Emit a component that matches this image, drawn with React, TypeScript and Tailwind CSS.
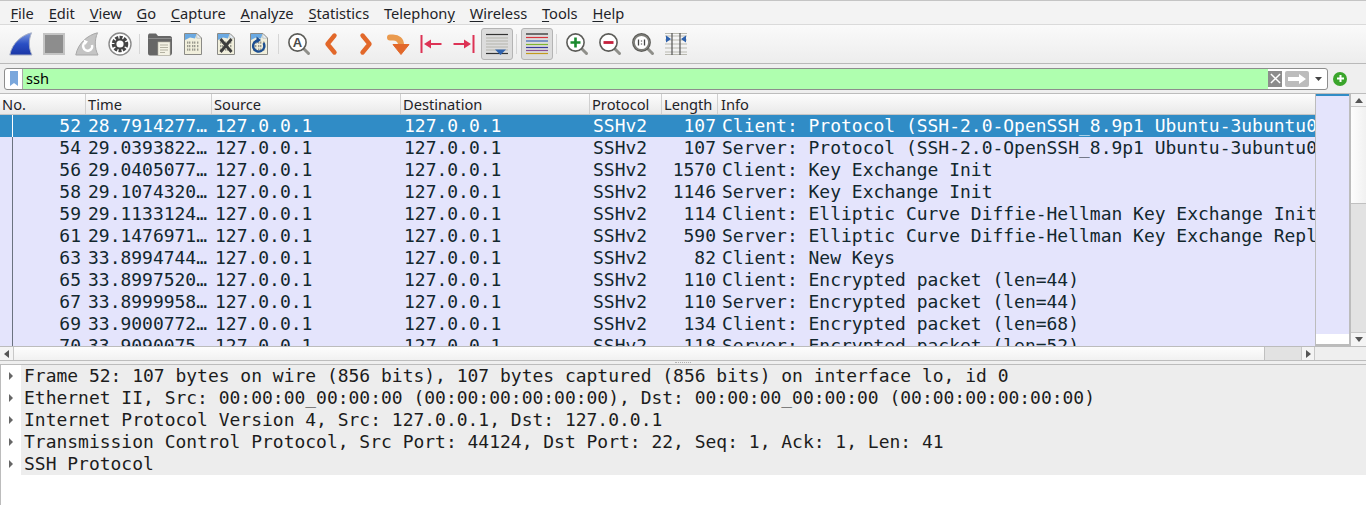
import type { ReactNode } from "react";

const menus: [string, string][] = [
  ["F", "ile"], ["E", "dit"], ["V", "iew"], ["G", "o"], ["C", "apture"], ["A", "nalyze"],
  ["S", "tatistics"], ["", "Telephony"], ["W", "ireless"], ["T", "ools"], ["H", "elp"],
];

const packets = [
  ["52", "28.7914277…", "107", "Client: Protocol (SSH-2.0-OpenSSH_8.9p1 Ubuntu-3ubuntu0.1)"],
  ["54", "29.0393822…", "107", "Server: Protocol (SSH-2.0-OpenSSH_8.9p1 Ubuntu-3ubuntu0.1)"],
  ["56", "29.0405077…", "1570", "Client: Key Exchange Init"],
  ["58", "29.1074320…", "1146", "Server: Key Exchange Init"],
  ["59", "29.1133124…", "114", "Client: Elliptic Curve Diffie-Hellman Key Exchange Init"],
  ["61", "29.1476971…", "590", "Server: Elliptic Curve Diffie-Hellman Key Exchange Reply, New Keys"],
  ["63", "33.8994744…", "82", "Client: New Keys"],
  ["65", "33.8997520…", "110", "Client: Encrypted packet (len=44)"],
  ["67", "33.8999958…", "110", "Server: Encrypted packet (len=44)"],
  ["69", "33.9000772…", "134", "Client: Encrypted packet (len=68)"],
  ["70", "33.9090075…", "118", "Server: Encrypted packet (len=52)"],
];

const details = [
  "Frame 52: 107 bytes on wire (856 bits), 107 bytes captured (856 bits) on interface lo, id 0",
  "Ethernet II, Src: 00:00:00_00:00:00 (00:00:00:00:00:00), Dst: 00:00:00_00:00:00 (00:00:00:00:00:00)",
  "Internet Protocol Version 4, Src: 127.0.0.1, Dst: 127.0.0.1",
  "Transmission Control Protocol, Src Port: 44124, Dst Port: 22, Seq: 1, Ack: 1, Len: 41",
  "SSH Protocol",
];

const columns = [
  ["No.", "w-[86px] pl-[2px]"], ["Time", "w-[126px] pl-[2px]"], ["Source", "w-[189px] pl-[2px]"], ["Destination", "w-[189px] pl-[2px]"],
  ["Protocol", "w-[72px] pl-[2px]"], ["Length", "w-[56px] pl-[2px]"], ["Info", "flex-1 pl-[3px]"],
];

function Ico({ children }: { children: ReactNode }) {
  return (
    <svg width="24" height="24" viewBox="0 0 24 24" fill="none">
      {children}
    </svg>
  );
}

function Tool({ children, checked }: { children: ReactNode; checked?: boolean }) {
  return (
    <div className="w-[33px] h-[32px] flex items-center justify-center">
      {checked ? (
        <div className="w-[32px] h-[32px] flex items-center justify-center rounded-[3px] border border-[#b4b4b4] bg-[#dcdcdc]">
          {children}
        </div>
      ) : (
        children
      )}
    </div>
  );
}

const Sep = () => <div className="w-[7px] flex justify-center"><div className="w-px h-[20px] bg-[#d6d6d6]" /></div>;

function Doc({ children }: { children?: ReactNode }) {
  return (
    <>
      <path d="M3.5 1.5H16L20.5 6V22.5H3.5Z" fill="#f1efdc" stroke="#8a8a86" />
      <path d="M4 2H15.5L14 6.5L9 5.5L4 8Z" fill="#6aa9e2" />
      <path d="M15.8 1.8V6.2H20.2Z" fill="#e8f1fa" stroke="#a0a0a0" strokeWidth=".5" />
      <g fill="#9a9a8e">
        {[9.5, 13, 16.5].map((y) =>
          [6, 8, 11, 13, 16].map((x) => <rect key={`${x}-${y}`} x={x} y={y} width="1.4" height="2.2" />),
        )}
      </g>
      {children}
    </>
  );
}

function Lens({ children }: { children?: ReactNode }) {
  return (
    <>
      <path d="M15.5 15.5L21.5 21.5" stroke="#8f8f8a" strokeWidth="3" strokeLinecap="round" />
      <circle cx="10.5" cy="10.5" r="8.6" fill="#fff" stroke="#5c5c58" strokeWidth="1.6" />
      {children}
    </>
  );
}

function Fin({ fill, stroke }: { fill: string; stroke: string }) {
  return <path d="M22.5 .8C13 3 3 11 .8 23H23C19.5 16 19.5 8 22.5 .8Z" fill={fill} stroke={stroke} />;
}

const MenuUnderline = ({ head, rest }: { head: string; rest: string }) => {
  if (rest === "Telephony") {
    return (
      <span>
        Telephon<span className="underline underline-offset-2">y</span>
      </span>
    );
  }
  return (
    <span>
      <span className="underline underline-offset-2">{head}</span>
      {rest}
    </span>
  );
};

export default function App() {
  return (
    <div className="w-[1366px] h-[505px] overflow-hidden flex flex-col bg-[#efefef] text-[#1f2328] font-['Noto_Sans',sans-serif]">
      <div className="h-[25px] mt-0 shrink-0 border-t border-[#c4c4c4] border-b border-b-[#dadada] flex items-center pl-[3px] text-[14.67px] bg-[#f3f3f3] relative">
        {menus.map(([h, r]) => (
          <div key={h + r} className="px-[7.4px]">
            <MenuUnderline head={h} rest={r} />
          </div>
        ))}
      </div>

      <div className="h-[39px] shrink-0 flex items-center pl-1 border-b border-[#b9b9b9] bg-gradient-to-b from-[#fafafa] to-[#ededed]">
        <Tool>
          <Ico>
            <defs>
              <linearGradient id="fin" x1="0" y1="0" x2="0" y2="1">
                <stop offset="0" stopColor="#7f9be0" />
                <stop offset="0.5" stopColor="#2a4fc4" />
                <stop offset="1" stopColor="#1a36a6" />
              </linearGradient>
            </defs>
            <Fin fill="url(#fin)" stroke="#a8b0c4" />
          </Ico>
        </Tool>
        <Tool>
          <Ico>
            <rect x="2" y="2" width="20" height="20" fill="#8d8d8d" stroke="#c4c4c4" strokeWidth="2" />
          </Ico>
        </Tool>
        <Tool>
          <Ico>
            <Fin fill="#c4c4c4" stroke="#a8a8a8" />
            <path d="M17 13A4.5 4.5 0 1 1 11 10" stroke="#fff" strokeWidth="2.5" />
            <path d="M8.5 7.5L13 9.5L10 13Z" fill="#fff" />
          </Ico>
        </Tool>
        <Tool>
          <Ico>
            <circle cx="12" cy="12" r="11" fill="#fff" stroke="#8a8a8a" strokeWidth="1.4" />
            <circle cx="12" cy="12" r="6.5" stroke="#444" strokeWidth="3.5" strokeDasharray="3 1.2" />
            <circle cx="12" cy="12" r="4.6" stroke="#444" strokeWidth="2" />
          </Ico>
        </Tool>
        <Sep />
        <Tool>
          <Ico>
            <path d="M0 4C0 2 1 1.5 2 1.5H8L10 4H22C23 4 24 5 24 6V21C24 22.5 23 23.5 22 23.5H2C.5 23.5 0 22 0 21Z" fill="#666" />
            <path d="M.5 6.5H23.5" stroke="#8c8c8c" />
            <rect x="10" y="10" width="12" height="13.5" fill="#f3f1e4" stroke="#b5b3a6" strokeWidth=".6" />
            <path d="M12 13H20M12 15.5H20M12 18H20M12 20.5H17" stroke="#b3b1a2" />
          </Ico>
        </Tool>
        <Tool>
          <Ico>
            <Doc />
          </Ico>
        </Tool>
        <Tool>
          <Ico>
            <Doc>
              <path d="M6.5 7L17.5 20M17.5 7L6.5 20" stroke="#3d3d3d" strokeWidth="2.8" />
            </Doc>
          </Ico>
        </Tool>
        <Tool>
          <Ico>
            <Doc>
              <path d="M16.5 11A5.6 5.6 0 1 1 10.5 8.5" stroke="#1d4f92" strokeWidth="2.4" />
              <path d="M9.5 4.5L14 8L9.5 11.5Z" fill="#1d4f92" />
            </Doc>
          </Ico>
        </Tool>
        <Sep />
        <Tool>
          <Ico>
            <Lens>
              <text x="10.5" y="15" textAnchor="middle" fontSize="13" fontWeight="700" fill="#4a4a4a" fontFamily="Liberation Sans">
                A
              </text>
            </Lens>
          </Ico>
        </Tool>
        <Tool>
          <Ico>
            <path d="M14.5 3.5L7.5 12L14.5 20.5" stroke="#e2682a" strokeWidth="4.4" strokeLinecap="round" strokeLinejoin="round" />
          </Ico>
        </Tool>
        <Tool>
          <Ico>
            <path d="M9.5 3.5L16.5 12L9.5 20.5" stroke="#e2682a" strokeWidth="4.4" strokeLinecap="round" strokeLinejoin="round" />
          </Ico>
        </Tool>
        <Tool>
          <Ico>
            <path d="M4 5.5H7C12 5.5 15 8 15 13" stroke="#ea9a4e" strokeWidth="6" strokeLinecap="round" />
            <path d="M7 12.5H23L15 22.5Z" fill="#e2682a" stroke="#e2682a" strokeLinejoin="round" />
          </Ico>
        </Tool>
        <Tool>
          <Ico>
            <path d="M2.5 3V21" stroke="#dd3355" strokeWidth="2" />
            <path d="M10 12H22.5" stroke="#dd3355" strokeWidth="2" />
            <path d="M5 12L12 7.5V16.5Z" fill="#dd3355" />
          </Ico>
        </Tool>
        <Tool>
          <Ico>
            <path d="M21.5 3V21" stroke="#dd3355" strokeWidth="2" />
            <path d="M1.5 12H14" stroke="#dd3355" strokeWidth="2" />
            <path d="M19 12L12 7.5V16.5Z" fill="#dd3355" />
          </Ico>
        </Tool>
        <Tool checked>
          <Ico>
            <path d="M1 2.5H23" stroke="#333" strokeWidth="1.2" />
            <path d="M1 6H23M1 9H23M1 12H23M1 15H23M1 18H23" stroke="#b4b4ac" />
            <path d="M1 21.5H23" stroke="#333" strokeWidth="1.2" />
            <path d="M10 17.5H21L15.5 23Z" fill="#2f62ad" />
          </Ico>
        </Tool>
        <Sep />
        <Tool checked>
          <Ico>
            <path d="M1 2H23" stroke="#222" strokeWidth="1.2" />
            <path d="M1 5.5H23" stroke="#d8343c" strokeWidth="1.2" />
            <path d="M1 9H23" stroke="#3b66b5" strokeWidth="1.2" />
            <path d="M1 12.5H23" stroke="#7fb52e" strokeWidth="1.2" />
            <path d="M1 15.5H23" stroke="#3a3a9c" strokeWidth="1.2" />
            <path d="M1 18.5H23" stroke="#8a4f95" strokeWidth="1.2" />
            <path d="M1 21.5H23" stroke="#c49a1e" strokeWidth="1.2" />
          </Ico>
        </Tool>
        <Sep />
        <Tool>
          <Ico>
            <Lens>
              <path d="M5.5 10.5H15.5M10.5 5.5V15.5" stroke="#1a8a2e" strokeWidth="2.6" />
            </Lens>
          </Ico>
        </Tool>
        <Tool>
          <Ico>
            <Lens>
              <path d="M5.5 10.5H15.5" stroke="#c4203c" strokeWidth="2.8" />
            </Lens>
          </Ico>
        </Tool>
        <Tool>
          <Ico>
            <Lens>
              <circle cx="10.5" cy="10.5" r="7.4" stroke="#7d7d78" strokeWidth="1.6" />
              <path d="M7.5 7.5V13.5M13.5 7.5V13.5M10.5 8.5V9.5M10.5 11.5V12.5" stroke="#444" strokeWidth="1.3" />
            </Lens>
          </Ico>
        </Tool>
        <Tool>
          <Ico>
            <path d="M1 4H23M1 8H23M1 12H23M1 16H23M1 20H23" stroke="#b9b9b0" />
            <path d="M1 1.5H23M1 22.5H23" stroke="#b9b9b0" />
            <path d="M8 1V23M16 1V23" stroke="#555" strokeWidth="1.2" />
            <path d="M2 3.5L7 7L2 10.5ZM22 3.5L17 7L22 10.5Z" fill="#2f62ad" />
          </Ico>
        </Tool>
      </div>

      <div className="h-[3px] shrink-0" />
      <div className="flex items-center h-[23px] shrink-0 pl-1 pr-[19px]">
        <div className="flex-1 h-[22px] flex items-stretch rounded-[3px] border border-[#8d8d8d] overflow-hidden bg-white">
          <div className="w-[18px] flex items-center justify-center border-r border-[#a9a9a9] shrink-0">
            <svg width="8" height="15" viewBox="0 0 8 15">
              <path d="M0 0H8V15L4 12L0 15Z" fill="#7aa7dc" />
            </svg>
          </div>
          <div className="flex-1 bg-[#afffaf] pl-[3px] text-[14.67px] leading-[18px] text-black">ssh</div>
          <div className="w-[14px] my-[2px] bg-[#8c8c8c] flex items-center justify-center shrink-0">
            <svg width="11" height="11" viewBox="0 0 12 12">
              <path d="M1 1L11 11M11 1L1 11" stroke="#fff" strokeWidth="1.6" />
            </svg>
          </div>
          <div className="w-[24px] my-[2px] ml-[3px] rounded-[2px] bg-[#bcbcbc] flex items-center justify-center shrink-0">
            <svg width="20" height="12" viewBox="0 0 20 12">
              <path d="M1 4H12V1L19 6L12 11V8H1Z" fill="#fff" />
            </svg>
          </div>
          <div className="w-[18px] flex items-center justify-center shrink-0">
            <svg width="7" height="4" viewBox="0 0 7 4">
              <path d="M0 0H7L3.5 4Z" fill="#444" />
            </svg>
          </div>
        </div>
        <div className="ml-[5px] w-[14px] h-[14px] shrink-0 rounded-full bg-[#3aa52b] flex items-center justify-center">
          <svg width="9" height="9" viewBox="0 0 9 9">
            <path d="M4.5 1V8M1 4.5H8" stroke="#fff" strokeWidth="2" />
          </svg>
        </div>
      </div>
      <div className="h-[3px] shrink-0" />

      <div className="h-[268px] shrink-0 flex flex-col border-y border-[#bdbdbd]">
        <div className="flex-1 min-h-0 flex">
          <div className="w-[1315px] shrink-0 overflow-hidden flex flex-col">
            <div className="h-[21px] w-[1316px] shrink-0 flex items-center text-[14.67px] bg-gradient-to-b from-[#fdfdfd] to-[#e9e9e9] border-b border-[#c6c6c6]">
              {columns.map(([name, width]) => (
                <div key={name} className={`${width} h-full flex items-center border-r border-[#d0d0d0] last:border-r-0 shrink-0`}>
                  {name}
                </div>
              ))}
            </div>
            <div className="flex-1 min-h-0 w-[1316px] overflow-hidden bg-[#e4e4fc] font-['DejaVu_Sans_Mono',monospace] text-[17.98px] text-[#12272e]">
              {packets.map(([no, time, len, info], i) => (
                <div key={no} className={`h-[22px] flex items-center whitespace-nowrap ${i === 0 ? "bg-[#308cc6] text-white" : ""}`}>
                  <div className="w-[86px] shrink-0 h-full relative text-right pr-[5px] leading-[22px]">
                    <div className={`absolute left-[12px] top-0 bottom-0 w-px ${i === 0 ? "bg-[#ffffff]" : "bg-[#6b7280]"}`} />
                    {no}
                  </div>
                  <div className="w-[126px] shrink-0 pl-[2px] leading-[22px]">{time}</div>
                  <div className="w-[189px] shrink-0 pl-[3px] leading-[22px]">127.0.0.1</div>
                  <div className="w-[189px] shrink-0 pl-[3px] leading-[22px]">127.0.0.1</div>
                  <div className="w-[72px] shrink-0 pl-[3px] leading-[22px]">SSHv2</div>
                  <div className="w-[56px] shrink-0 text-right pr-[2px] leading-[22px]">{len}</div>
                  <div className="flex-1 min-w-0 overflow-hidden pl-[4px] leading-[22px]">{info}</div>
                </div>
              ))}
            </div>
          </div>

          <div className="w-[36px] shrink-0 border-l border-r-2 border-[#bcbcbc] border-b-2 border-b-[#bcbcbc] bg-[#e4e4fc] flex flex-col">
            <div className="h-[2px] bg-[#308cc6]" />
            <div className="flex-1" />
            <div className="h-[10px] bg-white" />
          </div>

          <div className="flex-1 flex flex-col bg-[#e2e2e2]">
            <div className="h-[13px] bg-[#f4f4f4] flex items-center justify-center border-b border-[#c8c8c8]">
              <svg width="8" height="5" viewBox="0 0 8 5"><path d="M0 5H8L4 0Z" fill="#555" /></svg>
            </div>
            <div className="h-[97px] bg-gradient-to-r from-[#fdfdfd] to-[#f1f1f1] border-b border-[#c0c0c0]" />
            <div className="flex-1" />
            <div className="h-[14px] bg-[#f4f4f4] flex items-center justify-center border-t border-[#c8c8c8]">
              <svg width="8" height="5" viewBox="0 0 8 5"><path d="M0 0H8L4 5Z" fill="#555" /></svg>
            </div>
          </div>
        </div>

        <div className="h-[14px] shrink-0 flex border-t border-[#bcbcbc] bg-[#efefef]">
          <div className="w-[14px] flex items-center justify-center bg-[#f4f4f4] border-r border-[#c8c8c8]">
            <svg width="5" height="8" viewBox="0 0 5 8"><path d="M5 0V8L0 4Z" fill="#555" /></svg>
          </div>
          <div className="w-[1251px] bg-gradient-to-b from-[#fdfdfd] to-[#f1f1f1] border-r border-[#c0c0c0]" />
          <div className="w-[36px] bg-[#e2e2e2]" />
          <div className="w-[14px] flex items-center justify-center bg-[#f4f4f4] border-x border-[#c8c8c8]">
            <svg width="5" height="8" viewBox="0 0 5 8"><path d="M0 0V8L5 4Z" fill="#555" /></svg>
          </div>
        </div>
      </div>

      <div className="h-[3px] shrink-0 flex items-center justify-center">
        <div className="w-[16px] border-t border-dotted border-[#b0b0b0]" />
      </div>

      <div className="flex-1 min-h-0 bg-white border-t border-l border-[#bcbcbc] font-['DejaVu_Sans_Mono',monospace] text-[17.98px] text-[#1c1c1c]">
        {details.map((line) => (
          <div key={line} className="h-[22px] flex items-center whitespace-nowrap">
            <div className="w-[20px] shrink-0 flex justify-center bg-white h-full items-center">
              <svg width="4" height="8" viewBox="0 0 4 8"><path d="M0 0V8L4 4Z" fill="#666" /></svg>
            </div>
            <div className="flex-1 bg-[#ededed] h-full pl-[3px] leading-[22px]">{line}</div>
          </div>
        ))}
      </div>
    </div>
  );
}
